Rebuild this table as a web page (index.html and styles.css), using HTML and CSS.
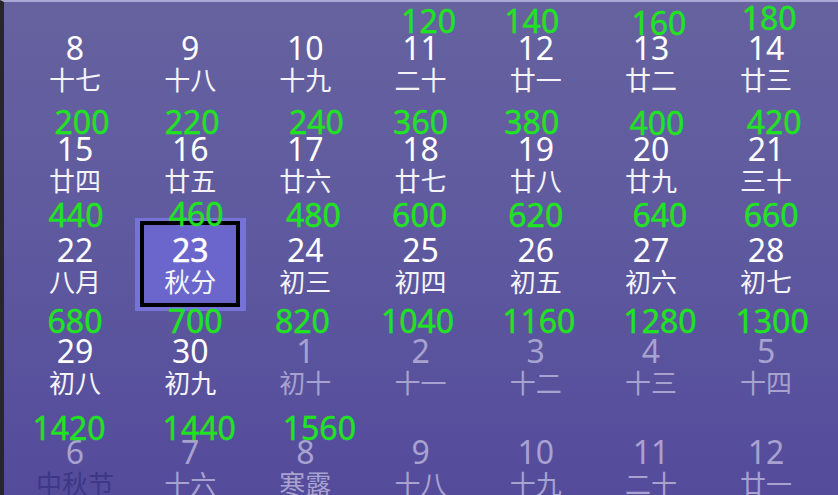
FILE: index.html
```html
<!DOCTYPE html>
<html lang="zh">
<head>
<meta charset="utf-8">
<title>Calendar</title>
<link rel="stylesheet" href="styles.css">
</head>
<body>
<div class="screen">
  <div class="grid">
    <div class="cell"><span class="d">8</span><span class="l">十七</span></div>
    <div class="cell"><span class="d">9</span><span class="l">十八</span></div>
    <div class="cell"><span class="d">10</span><span class="l">十九</span></div>
    <div class="cell"><span class="tag" style="--dx:8px;--ty:5px">120</span><span class="d">11</span><span class="l">二十</span></div>
    <div class="cell"><span class="tag" style="--dx:-4px;--ty:5px">140</span><span class="d">12</span><span class="l">廿一</span></div>
    <div class="cell"><span class="tag" style="--dx:8px;--ty:7px">160</span><span class="d">13</span><span class="l">廿二</span></div>
    <div class="cell"><span class="tag" style="--dx:3px;--ty:2px">180</span><span class="d">14</span><span class="l">廿三</span></div>

    <div class="cell"><span class="tag" style="--dx:7px;--ty:5px">200</span><span class="d">15</span><span class="l">廿四</span></div>
    <div class="cell"><span class="tag" style="--dx:2px;--ty:5px">220</span><span class="d">16</span><span class="l">廿五</span></div>
    <div class="cell"><span class="tag" style="--dx:11px;--ty:5px">240</span><span class="d">17</span><span class="l">廿六</span></div>
    <div class="cell"><span class="tag" style="--dx:0px;--ty:5px">360</span><span class="d">18</span><span class="l">廿七</span></div>
    <div class="cell"><span class="tag" style="--dx:-4px;--ty:5px">380</span><span class="d">19</span><span class="l">廿八</span></div>
    <div class="cell"><span class="tag" style="--dx:6px;--ty:6px">400</span><span class="d">20</span><span class="l">廿九</span></div>
    <div class="cell"><span class="tag" style="--dx:8px;--ty:5px">420</span><span class="d">21</span><span class="l">三十</span></div>

    <div class="cell"><span class="tag" style="--dx:1px;--ty:-3px">440</span><span class="d">22</span><span class="l">八月</span></div>
    <div class="cell selected"><div class="frame"><span class="d">23</span><span class="l">秋分</span></div><span class="tag" style="--dx:6px;--ty:-4px">460</span></div>
    <div class="cell"><span class="tag" style="--dx:8px;--ty:-3px">480</span><span class="d">24</span><span class="l">初三</span></div>
    <div class="cell"><span class="tag" style="--dx:-1px;--ty:-3px">600</span><span class="d">25</span><span class="l">初四</span></div>
    <div class="cell"><span class="tag" style="--dx:0px;--ty:-3px">620</span><span class="d">26</span><span class="l">初五</span></div>
    <div class="cell"><span class="tag" style="--dx:9px;--ty:-3px">640</span><span class="d">27</span><span class="l">初六</span></div>
    <div class="cell"><span class="tag" style="--dx:5px;--ty:-3px">660</span><span class="d">28</span><span class="l">初七</span></div>

    <div class="cell"><span class="tag" style="--dx:0px;--ty:2px">680</span><span class="d">29</span><span class="l">初八</span></div>
    <div class="cell"><span class="tag" style="--dx:5px;--ty:2px">700</span><span class="d">30</span><span class="l">初九</span></div>
    <div class="cell other"><span class="tag" style="--dx:-3px;--ty:2px">820</span><span class="d">1</span><span class="l">初十</span></div>
    <div class="cell other"><span class="tag" style="--dx:-3px;--ty:2px">1040</span><span class="d">2</span><span class="l">十一</span></div>
    <div class="cell other"><span class="tag" style="--dx:3px;--ty:2px">1160</span><span class="d">3</span><span class="l">十二</span></div>
    <div class="cell other"><span class="tag" style="--dx:9px;--ty:2px">1280</span><span class="d">4</span><span class="l">十三</span></div>
    <div class="cell other"><span class="tag" style="--dx:6px;--ty:2px">1300</span><span class="d">5</span><span class="l">十四</span></div>

    <div class="cell other"><span class="tag" style="--dx:-6px;--ty:8px">1420</span><span class="d">6</span><span class="l fest">中秋节</span></div>
    <div class="cell other"><span class="tag" style="--dx:9px;--ty:8px">1440</span><span class="d">7</span><span class="l">十六</span></div>
    <div class="cell other"><span class="tag" style="--dx:14px;--ty:8px">1560</span><span class="d">8</span><span class="l">寒露</span></div>
    <div class="cell other"><span class="d">9</span><span class="l">十八</span></div>
    <div class="cell other"><span class="d">10</span><span class="l">十九</span></div>
    <div class="cell other"><span class="d">11</span><span class="l">二十</span></div>
    <div class="cell other"><span class="d">12</span><span class="l">廿一</span></div>
  </div>
</div>
</body>
</html>
```

FILE: styles.css
```css
html, body {
  margin: 0;
  padding: 0;
  width: 838px;
  height: 495px;
  overflow: hidden;
  background: #5b55a0;
}

.screen {
  width: 834px;
  height: 493px;
  border-left: 4px solid #27272b;
  border-top: 2px solid #aba7d4;
  background: linear-gradient(180deg, #66629f 0%, #5f5a9f 45%, #544b9b 100%);
  font-family: "Noto Sans", "Noto Sans CJK SC", sans-serif;
  overflow: hidden;
}

.grid {
  display: grid;
  grid-template-columns: repeat(7, 111px);
  grid-auto-rows: 93px;
  column-gap: 4.2px;
  row-gap: 8px;
  padding: 13.5px 0 0 15.5px;
}

.cell {
  position: relative;
  display: flex;
  flex-direction: column;
  align-items: center;
  justify-content: center;
  color: #ffffff;
}

.frame {
  display: flex;
  flex-direction: column;
  align-items: center;
  justify-content: center;
}

.d {
  font-size: 32px;
  line-height: 32px;
  height: 32px;
  margin-top: 1px;
}

.l {
  font-family: "Noto Sans CJK SC", sans-serif;
  font-size: 26px;
  line-height: 30px;
  height: 30px;
  color: #f4f4f8;
}

.other .d,
.other .l {
  color: #a7a2cf;
}

.other .l.fest {
  color: #3c3886;
}

.tag {
  position: absolute;
  left: 50%;
  top: calc(var(--ty) - 16px);
  transform: translateX(calc(-50% + var(--dx)));
  font-size: 32px;
  line-height: 32px;
  color: #1fe41f;
  white-space: nowrap;
  z-index: 2;
  -webkit-text-stroke: 0.4px #1fe41f;
}

.selected {
  background: #7673d8;
}

.selected .frame {
  width: 92px;
  height: 78px;
  border: 4px solid #000000;
  background: #6a66cc;
}

.selected .d {
  -webkit-text-stroke: 0.5px #ffffff;
}
```
